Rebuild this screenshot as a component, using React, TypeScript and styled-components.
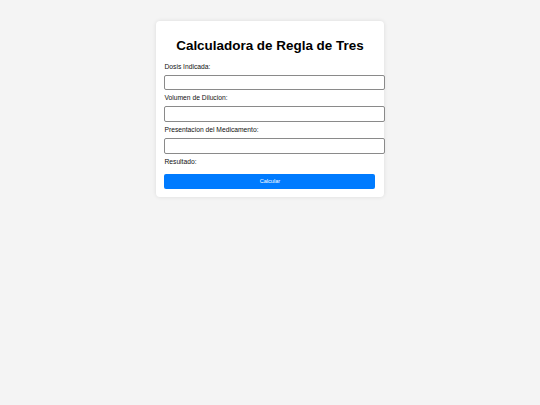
import React from "react";
import styled, { createGlobalStyle } from "styled-components";

const GlobalStyle = createGlobalStyle`
  html, body {
    margin: 0;
    padding: 0;
    background: #f4f4f4;
    font-family: "Liberation Sans", Arial, Helvetica, sans-serif;
  }
  body {
    width: 540px;
    height: 405px;
    overflow: hidden;
  }
`;

const Card = styled.div`
  width: 211px;
  margin: 21px auto 0;
  padding: 8.4px 8.5px 8.2px 8.4px;
  background: #ffffff;
  border-radius: 4px;
  box-shadow: 0 0 4px rgba(0, 0, 0, 0.1);
`;

const Title = styled.h1`
  margin: 9px 0 9px;
  font-size: 13.44px;
  line-height: 15.5px;
  font-weight: 700;
  color: #000;
  text-align: center;
`;

const Label = styled.label`
  display: block;
  margin: 0 0 4.2px;
  font-size: 6.72px;
  line-height: 7.7px;
  color: #111;
`;

const Input = styled.input`
  display: block;
  box-sizing: border-box;
  width: calc(100% + 9.5px);
  height: 15.6px;
  margin: 0 0 4.1px;
  padding: 0 3px;
  border: 1px solid #8a8a8a;
  border-radius: 2px;
  background: #fff;
  font-size: 6.72px;
  font-family: inherit;
  outline: none;
`;

const Result = styled.p`
  margin: 0 0 8.5px;
  font-size: 6.72px;
  line-height: 7.7px;
  color: #111;
`;

const Button = styled.button`
  display: block;
  width: 100%;
  height: 15px;
  padding: 0;
  border: none;
  border-radius: 2px;
  background: #007bff;
  color: #ffffff;
  font-family: inherit;
  font-size: 5.6px;
  cursor: pointer;
`;

export default function App() {
  return (
    <>
      <GlobalStyle />
      <Card>
        <Title>Calculadora de Regla de Tres</Title>
        <Label htmlFor="dosis">Dosis Indicada:</Label>
        <Input id="dosis" type="text" />
        <Label htmlFor="volumen">Volumen de Dilucion:</Label>
        <Input id="volumen" type="text" />
        <Label htmlFor="presentacion">Presentacion del Medicamento:</Label>
        <Input id="presentacion" type="text" />
        <Result>Resultado:</Result>
        <Button type="button">Calcular</Button>
      </Card>
    </>
  );
}
